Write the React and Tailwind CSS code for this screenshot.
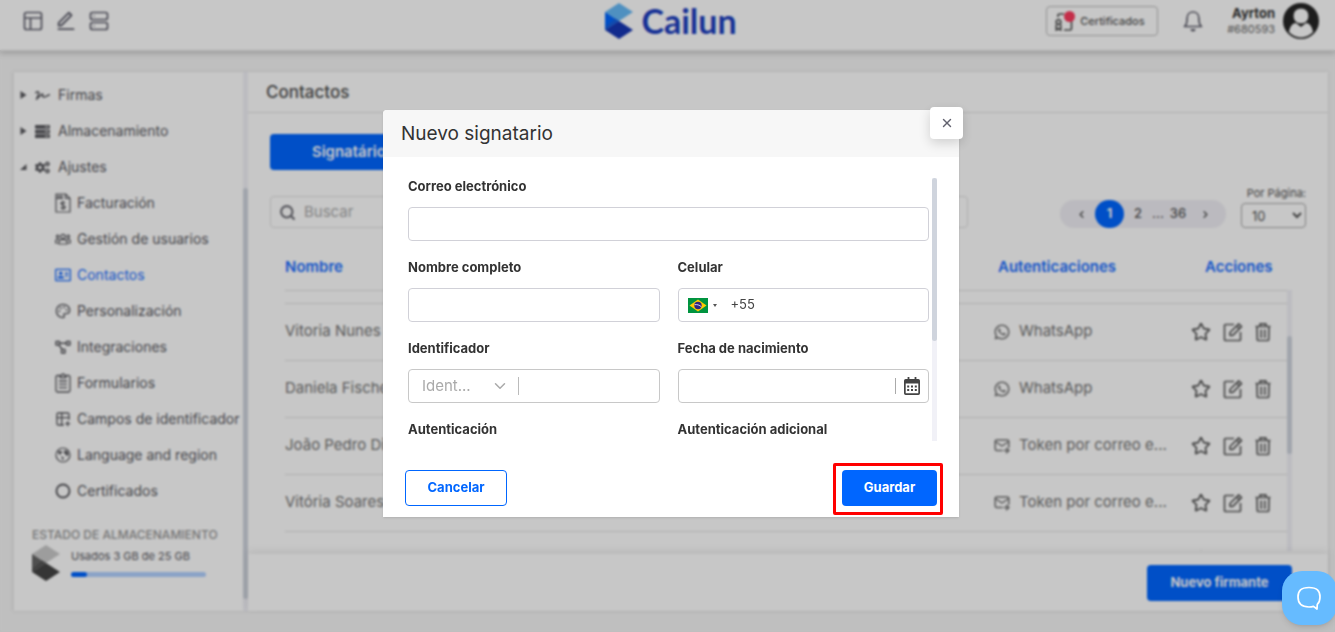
import React from "react";
import { RiEditLine, RiWhatsappLine } from "react-icons/ri";
import { FaServer, FaSignature, FaCogs, FaRegAddressCard } from "react-icons/fa";
import { TbMailForward, TbTablePlus } from "react-icons/tb";
import { ChevronDown, ChevronLeft, ChevronRight, Palette, Search, Star, X } from "lucide-react";

function CubeLogo({ className, top, left, inner, bottom }) {
  return (
    <svg className={className} viewBox="0 0 28 36" aria-hidden="true">
      <path d="M14 0 28 9 14 18 0 9Z" fill={top} />
      <path d="M0 9 14 18 0 27Z" fill={left} />
      <path d="M14 18 28 27 14 36 0 27Z" fill={bottom} />
      <path d="M0 27 14 18 10 15.500 0 24Z" fill={inner} />
    </svg>
  );
}

function Drawn({ className, box = "0 0 16 16", width = 1.3, children }) {
  return (
    <svg className={className} viewBox={box} fill="none" stroke="currentColor" strokeWidth={width} strokeLinejoin="round" aria-hidden="true">
      {children}
    </svg>
  );
}

function LayoutIcon({ className }) {
  return (
    <Drawn className={className} box="0 0 20 20" width={1.7}>
      <rect x="1.500" y="1.500" width="17" height="17" rx="2" />
      <path d="M1.500 7h17M7.500 7v11.500" />
    </Drawn>
  );
}

function DrawersIcon({ className }) {
  return (
    <Drawn className={className} box="0 0 20 20" width={1.7}>
      <rect x="1.500" y="1.500" width="17" height="7" rx="2" />
      <rect x="1.500" y="11.500" width="17" height="7" rx="2" />
      <path d="M4.500 5h1M4.500 15h1" />
    </Drawn>
  );
}

function InvoiceIcon({ className }) {
  return (
    <Drawn className={className} box="0 0 16 20" width={1.2}>
      <path d="M1 1h9.500L15 5.500V19H1Z" />
      <path d="M10.500 1v4.500H15M3 2v3M5 2v3M7 2v3M1 5.500h7" />
      <path d="M10.200 10.200C9.800 9.400 9 9 8 9c-1.200 0-2.100.6-2.100 1.600 0 2.300 4.400 1 4.400 3.400 0 1-.9 1.600-2.200 1.600-1.200 0-2-.5-2.400-1.400M8 7.700v9.200" />
    </Drawn>
  );
}

function PeopleIcon({ className }) {
  return (
    <Drawn className={className} width={1.2}>
      <circle cx="8" cy="5.500" r="2.200" />
      <circle cx="2.700" cy="5.500" r="1.300" />
      <circle cx="13.300" cy="5.500" r="1.300" />
      <path d="M4 13v-2.200C4 9.400 5.200 8.700 6.300 8.700h3.400c1.100 0 2.300.7 2.300 2.100V13ZM3.500 12H.7V9.800c0-1 .8-1.500 1.600-1.500H4M12.500 12h2.800V9.800c0-1-.8-1.500-1.600-1.500H12" />
    </Drawn>
  );
}

function ClipboardIcon({ className }) {
  return (
    <Drawn className={className} box="0 0 16 20" width={1.3}>
      <path d="M5 2.500H2.500A1.500 1.500 0 0 0 1 4v13.500A1.500 1.500 0 0 0 2.500 19h11a1.500 1.500 0 0 0 1.500-1.500V4a1.500 1.500 0 0 0-1.500-1.500H11" />
      <path d="M5 4.500v-2h1.500a1.500 1.500 0 0 1 3 0H11v2ZM4 8h8M4 11.300h8M4 14.600h8" />
    </Drawn>
  );
}

function GlobeIcon({ className }) {
  return (
    <Drawn className={className} width={1.2}>
      <circle cx="8" cy="8" r="7" />
      <path d="M3 4.500c1.500-.8 2.500.3 4-.2.5 1.700-1.200 1.500-1.600 2.900-.2.800-1.600.4-2.400-2.700ZM9.500 3.500l3 .7 1 3.300-1.800 1.500-1-2-1.500-.7ZM6.500 9.500l2 1-.7 2.700Z" fill="currentColor" strokeWidth=".5" />
    </Drawn>
  );
}

function NodesIcon({ className }) {
  return (
    <Drawn className={className} width={1.4}>
      <path d="M1 2.500h3.500v3.500H1zM11.500 2.500H15v3.500h-3.500zM6.500 10.500H10V14H6.500zM4.500 4.200h7M4 6l3.200 4.500" />
    </Drawn>
  );
}

function RingIcon({ className }) {
  return (
    <Drawn className={className} width={1.9}>
      <circle cx="8" cy="8" r="6.500" />
    </Drawn>
  );
}

function CertificateIcon() {
  return (
    <svg className="h-5 w-5" viewBox="0 0 20 20" fill="none" stroke="#555" strokeWidth="1.700" aria-hidden="true">
      <path d="M4 6V4.500A1.500 1.500 0 0 1 5.500 3H10M17.500 8v9.500a1.500 1.500 0 0 1-1.500 1.500H10" />
      <circle cx="4.500" cy="11" r="2.300" />
      <path d="M2.300 13.500V19l2.200-1.500L6.700 19v-5.500" />
    </svg>
  );
}

function BellIcon() {
  return (
    <svg className="h-6 w-5" viewBox="0 0 20 24" fill="none" stroke="#62626f" strokeWidth="1.700" aria-hidden="true">
      <path d="M1.500 17.500c2-1.500 2.600-4 2.600-8.300C4.100 5.500 6.500 3 10 3s5.900 2.500 5.900 6.200c0 4.300.6 6.800 2.600 8.300Z" strokeLinejoin="round" />
      <path d="M7.500 20h5a2.500 2.500 0 0 1-5 0Z" fill="#62626f" stroke="none" />
    </svg>
  );
}

function EditIcon() {
  return (
    <Drawn className="h-5 w-5" box="0 0 20 20" width={1.7}>
      <path d="M11 2.500H2.500a1 1 0 0 0-1 1v14a1 1 0 0 0 1 1h14a1 1 0 0 0 1-1V10" />
      <path d="M7 13.300V10.500l8.700-8.700 2.800 2.800-8.700 8.700ZM13.500 4l2.800 2.800" width="1.500" />
    </Drawn>
  );
}

function TrashIcon() {
  return (
    <Drawn className="h-5 w-4" box="0 0 16 20" width={1.7}>
      <path d="M.5 4.500h15M5 4V1.900h6V4M2 5l.3 12.500a1 1 0 0 0 1 1h9.400a1 1 0 0 0 1-1L14 5" />
      <path d="M6.200 7.500v8.500M9.800 7.500v8.500" />
    </Drawn>
  );
}

function CalendarIcon() {
  return (
    <svg className="h-[18px] w-4" viewBox="0 0 16 18" aria-hidden="true">
      <path d="M1.700 2h12.600A1.700 1.700 0 0 1 16 3.700v12.600a1.700 1.700 0 0 1-1.700 1.700H1.700A1.700 1.700 0 0 1 0 16.300V3.700A1.700 1.700 0 0 1 1.700 2Zm0 4.500v9.800h12.600V6.500Z" fill="#444" fillRule="evenodd" />
      <path d="M4.500 0v3M11.500 0v3" stroke="#444" strokeWidth="1.800" />
      <path d="M3.200 8.500h2v2h-2zM7 8.500h2v2H7zM10.800 8.500h2v2h-2zM3.200 12h2v2h-2zM7 12h2v2H7zM10.800 12h2v2h-2z" fill="#444" />
    </svg>
  );
}

function BrazilFlag() {
  return (
    <svg className="h-[15px] w-5" viewBox="0 0 20 15" aria-hidden="true">
      <path fill="#009440" d="M0 0h20v15H0z" />
      <path fill="#ffcb00" d="M10 1.500 18.500 7.500 10 13.500 1.500 7.500Z" />
      <circle cx="10" cy="7.500" r="3.700" fill="#302681" />
      <path d="M6.600 6.700c2.500-.4 5 .3 6.800 2.100" stroke="#fff" strokeWidth=".8" fill="none" />
    </svg>
  );
}

const sections = [
  { label: "Firmas", icon: FaSignature },
  { label: "Almacenamiento", icon: FaServer },
  { label: "Ajustes", icon: FaCogs, open: true },
];

const settings = [
  { label: "Facturación", icon: InvoiceIcon, tall: true },
  { label: "Gestión de usuarios", icon: PeopleIcon },
  { label: "Contactos", icon: FaRegAddressCard, active: true },
  { label: "Personalización", icon: Palette },
  { label: "Integraciones", icon: NodesIcon },
  { label: "Formularios", icon: ClipboardIcon, tall: true },
  { label: "Campos de identificador", icon: TbTablePlus },
  { label: "Language and region", icon: GlobeIcon },
  { label: "Certificados", icon: RingIcon },
];

const contacts = [
  { name: "Vitoria Nunes", auth: "WhatsApp" },
  { name: "Daniela Fischer", auth: "WhatsApp" },
  { name: "João Pedro Dias", auth: "Token por correo e..." },
  { name: "Vitória Soares", auth: "Token por correo e..." },
];

function TopBar() {
  return (
    <header className="relative z-10 grid h-[51px] shrink-0 grid-cols-[1fr_auto_1fr] items-center border-b border-[#e0e0e0] bg-white pb-2 pl-[23px] pr-4 shadow-[0_3px_5px_rgba(0,0,0,0.16)]">
      <nav className="flex items-center gap-3 text-[#62626f]">
        <a href="#panel" aria-label="Panel"><LayoutIcon className="h-5 w-5" /></a>
        <a href="#firmar" aria-label="Firmar"><RiEditLine className="h-[22px] w-[22px]" /></a>
        <a href="#archivos" aria-label="Archivos"><DrawersIcon className="h-5 w-5" /></a>
      </nav>
      <a href="#inicio" className="flex items-center gap-2 font-[Lato,sans-serif] text-[34px] font-bold leading-9 text-[#1d3fc0]">
        <CubeLogo className="h-9 w-7" top="#66b9f7" left="#0066ff" inner="#1560e0" bottom="#1636b5" />
        Cailun
      </a>
      <div className="flex items-center justify-end">
        <button className="flex h-[30px] w-[112px] items-center gap-1.5 rounded border border-[#bdbdbd] pl-[7px] text-[11px] font-medium text-[#555]">
          <span className="relative">
            <CertificateIcon />
            <span className="absolute -right-px top-0 h-[11px] w-[11px] rounded-full bg-[#fb3b5e]" />
          </span>
          <span>Certificados</span>
        </button>
        <button className="ml-[25px]" aria-label="Notificaciones"><BellIcon /></button>
        <div className="ml-6 text-right leading-4">
          <p className="text-[13px] font-bold text-[#333]">Ayrton</p>
          <p className="text-[11px] text-[#666]">#680593</p>
        </div>
        <button className="ml-2" aria-label="Cuenta">
          <svg className="h-9 w-9" viewBox="0 0 36 36" aria-hidden="true">
            <circle cx="18" cy="18" r="18" fill="#262626" />
            <path d="M6 29c1-6 4-9 7-9l5 4 5-4c3 0 6 3 7 9a16 16 0 0 1-24 0Z" fill="#fff" />
            <circle cx="18" cy="13" r="8" fill="#fff" stroke="#262626" />
          </svg>
        </button>
      </div>
    </header>
  );
}

function Sidebar() {
  return (
    <aside className="flex w-[235px] shrink-0 border-l border-[#eee]">
      <div className="flex min-w-0 flex-1 flex-col whitespace-nowrap pt-[5px] text-[#5a5a5f]">
        <ul className="text-sm">
          {sections.map(({ label, icon: Icon, open }) => (
            <li key={label}>
              <a href="#menu" className="flex h-9 items-center gap-2 pl-1.5">
                <svg className="h-2 w-[7px]" viewBox="0 0 7 8" fill="currentColor" aria-hidden="true">
                  <path d={open ? "M6.500 1v6H0Z" : "M.5 0 6.500 4 .5 8Z"} />
                </svg>
                <Icon className="h-[15px] w-[15px]" />
                {label}
              </a>
            </li>
          ))}
          {settings.map(({ label, icon: Icon, active, tall }) => (
            <li key={label}>
              <a href="#menu" className={active ? "flex h-9 items-center gap-1.5 pl-[41px] text-[#1a6dff]" : "flex h-9 items-center gap-1.5 pl-[41px]"}>
                <Icon className={tall ? "h-5 w-4 shrink-0" : "h-4 w-4 shrink-0"} />
                {label}
              </a>
            </li>
          ))}
        </ul>
        <section className="mt-[18px] pl-[18px]">
          <h2 className="text-xs font-medium leading-4 text-[#999]">ESTADO DE ALMACENAMIENTO</h2>
          <div className="mt-0.5 flex gap-[11px]">
            <CubeLogo className="h-9 w-7" top="#cacaca" left="#666" inner="#555" bottom="#444" />
            <div className="w-[135px] pt-0.5 text-[11px] leading-[18px]">
              <label htmlFor="storage">Usados 3 GB de 25 GB</label>
              <div id="storage" role="progressbar" aria-valuenow={3} aria-valuemax={25} className="mt-[7px] h-[5px] rounded-full bg-[#b2d1ff]">
                <div className="h-full w-[12%] rounded-full bg-[#0066ff]" />
              </div>
            </div>
          </div>
        </section>
      </div>
      <div className="w-[5px] shrink-0 bg-[#f1f1f7] pb-3 pt-[116px]">
        <div className="h-full rounded-full bg-[#cfd4dd]" />
      </div>
    </aside>
  );
}

function Pagination() {
  return (
    <nav className="flex h-7 items-center rounded-full bg-[#f0eff5] text-[13px] font-medium text-[#555]" aria-label="Páginas">
      <button className="flex w-[35px] justify-end pr-2" aria-label="Anterior"><ChevronLeft size={11} strokeWidth={3} /></button>
      <button className="h-7 w-[29px] rounded-full bg-[#0066ff] font-bold text-white">1</button>
      <button className="w-7">2</button>
      <span className="w-3">...</span>
      <button className="w-7">36</button>
      <button className="flex w-[34px] pl-2" aria-label="Siguiente"><ChevronRight size={11} strokeWidth={3} /></button>
    </nav>
  );
}

function ContactRow({ name, auth }) {
  const AuthIcon = auth === "WhatsApp" ? RiWhatsappLine : TbMailForward;
  return (
    <tr className="h-[57px] border-b border-[#e2e2e2]">
      <td className="text-[15px]">{name}</td>
      <td>
        <span className="flex items-center gap-2 text-[15px]"><AuthIcon className="h-[18px] w-[18px]" />{auth}</span>
      </td>
      <td>
        <span className="flex items-center gap-3 text-[#606060]">
          <button aria-label={"Favorito " + name}><Star size={20} strokeWidth={2.2} /></button>
          <button aria-label={"Editar " + name}><EditIcon /></button>
          <button aria-label={"Eliminar " + name}><TrashIcon /></button>
        </span>
      </td>
    </tr>
  );
}

function Contacts() {
  return (
    <main className="flex min-w-0 flex-1 flex-col">
      <div className="h-[41px] shrink-0 border-b border-[#e2e2e2] pl-[18px] text-[17px] font-medium leading-[41px] text-[#505050]">
        <h1>Contactos</h1>
      </div>
      <div className="flex min-h-0 flex-1 flex-col pl-[22px] pt-[21px]">
        <button className="h-9 w-[166px] shrink-0 rounded bg-[#0066ff] text-[15px] font-semibold text-white">Signatários</button>
        <div className="mt-[15px] flex shrink-0 items-end pr-[22px]">
          <label className="flex h-8 max-w-[698px] flex-1 items-center gap-2 rounded border border-[#e2e2e2] px-2 text-[#707078]">
            <Search size={17} strokeWidth={3} />
            <input aria-label="Buscar" placeholder="Buscar" className="min-w-0 flex-1 bg-transparent text-[15px] placeholder:text-[#aaa] focus:outline-none" />
          </label>
          <div className="ml-auto flex items-end gap-[15px]">
            <Pagination />
            <div className="flex flex-col items-end gap-0.5 text-[11px] text-[#555]">
              <label htmlFor="per-page" className="leading-4">Por Página:</label>
              <select id="per-page" className="h-[25px] w-[65px] rounded border border-[#a8a8a8] bg-white pl-1.5 text-[13px]">
                <option>10</option>
                <option>25</option>
              </select>
            </div>
          </div>
        </div>
        <div className="mb-[3px] ml-[15px] mr-9 mt-2 flex min-h-0 flex-1 overflow-hidden">
          <table className="w-full table-fixed self-start text-left text-[#757575]">
            <colgroup>
              <col />
              <col className="w-[198px]" />
              <col className="w-24" />
            </colgroup>
            <thead>
              <tr className="h-[54px] border-b border-[#e2e2e2] text-[15px] text-[#1a6dff]">
                <th className="pt-2 font-semibold">Nombre</th>
                <th className="pl-[5px] pt-2 font-semibold">Autenticaciones</th>
                <th className="pl-3.5 pt-2 font-semibold">Acciones</th>
              </tr>
            </thead>
            <tbody>
              <tr className="h-[13px] border-b border-[#e2e2e2]"><td colSpan={3} /></tr>
              {contacts.map((c) => <ContactRow key={c.name} {...c} />)}
              <ContactRow name="" auth="" />
            </tbody>
          </table>
          <div className="mt-[54px] w-[5px] shrink-0 bg-[#f1f1f7] pt-[46px]">
            <div className="h-[118px] rounded-full bg-[#cfd4dd]" />
          </div>
        </div>
      </div>
      <footer className="flex h-[57px] shrink-0 items-center justify-end pr-9 shadow-[0_-3px_8px_rgba(0,0,0,0.08)]">
        <button className="h-9 w-[145px] rounded bg-[#0066ff] text-[13px] font-bold text-white">Nuevo firmante</button>
      </footer>
    </main>
  );
}

const labelClass = "text-[13px] font-bold leading-[17px] text-[#333]";
const boxClass = "h-[34px] w-full rounded border border-[#d1d1d8] bg-white px-3 text-[13px] text-[#444]";

function Field({ id, label, className, children }) {
  return (
    <div className={"flex flex-col gap-3 " + (className || "")}>
      <label htmlFor={id} className={labelClass}>{label}</label>
      {children}
    </div>
  );
}

function SignerDialog() {
  return (
    <div role="dialog" aria-modal="true" aria-labelledby="dialog-title" className="relative w-full max-w-xl rounded-t-sm bg-white shadow-sm">
      <div className="flex h-[47px] items-center rounded-t-sm bg-[#f7f7f7] pl-[18px]">
        <h2 id="dialog-title" className="text-[19px] leading-6 text-[#333]">Nuevo signatario</h2>
      </div>
      <button aria-label="Cerrar" className="absolute -right-1 -top-[3px] grid h-8 w-[33px] place-items-center rounded bg-white text-[#62626f] shadow-[0_4px_12px_rgba(0,0,0,0.16)]">
        <X size={14} strokeWidth={2.4} />
      </button>
      <form>
        <div className="mb-[29px] mt-[21px] flex h-[263px] gap-[3px] overflow-hidden pl-[25px] pr-[22px]">
          <div className="grid flex-1 grid-cols-2 content-start gap-[18px]">
            <Field id="email" label="Correo electrónico" className="col-span-2">
              <input id="email" type="email" className={boxClass} />
            </Field>
            <Field id="name" label="Nombre completo">
              <input id="name" className={boxClass} />
            </Field>
            <Field id="phone" label="Celular">
              <div className="flex h-[34px] items-center rounded border border-[#d1d1d8] pl-[9px]">
                <button type="button" aria-label="País" className="flex items-center gap-[5px]">
                  <BrazilFlag />
                  <svg className="h-[3px] w-1" viewBox="0 0 4 3" aria-hidden="true"><path d="M0 0h4L2 3Z" fill="#555" /></svg>
                </button>
                <input id="phone" defaultValue="+55" className="ml-3.5 min-w-0 flex-1 text-[13px] text-[#444] focus:outline-none" />
              </div>
            </Field>
            <Field id="identifier" label="Identificador">
              <div className="flex h-[34px] items-center rounded border border-[#c8c8c8]">
                <select aria-label="Tipo de identificador" className="w-[74px] appearance-none pl-[13px] text-[15px] text-[#aaa]">
                  <option>Ident...</option>
                </select>
                <ChevronDown size={18} className="ml-2 mr-[9px] shrink-0 text-[#aaa]" />
                <input id="identifier" className="h-[18px] min-w-0 flex-1 border-l border-[#bbb] px-2 text-[13px] focus:outline-none" />
              </div>
            </Field>
            <Field id="birth" label="Fecha de nacimiento">
              <div className="flex h-[34px] items-center rounded border border-[#c8c8c8] pr-2">
                <input id="birth" className="h-4 min-w-0 flex-1 border-r border-[#aaa] px-2 text-[13px] focus:outline-none" />
                <button type="button" aria-label="Abrir calendario" className="ml-2"><CalendarIcon /></button>
              </div>
            </Field>
            <Field id="auth" label="Autenticación">
              <select id="auth" className={boxClass}><option /></select>
            </Field>
            <Field id="auth-extra" label="Autenticación adicional">
              <select id="auth-extra" className={boxClass}><option /></select>
            </Field>
          </div>
          <div className="w-[5px] shrink-0 bg-[#f1f1f7]">
            <div className="h-[163px] rounded-full bg-[#cfd4dd]" />
          </div>
        </div>
        <div className="flex items-center justify-between pb-[11px] pl-[22px] pr-[22px] text-[13px] font-bold">
          <button type="button" className="h-9 w-[102px] rounded border border-[#0066ff] text-[#0066ff]">Cancelar</button>
          <div className="relative">
            <button type="button" className="h-9 w-[95px] rounded bg-[#0066ff] text-white">Guardar</button>
            <span className="pointer-events-none absolute -bottom-[9px] -left-[9px] -right-1.5 -top-[7px] rounded-[2px] border-[3px] border-[#ff0000]" />
          </div>
        </div>
      </form>
    </div>
  );
}

export default function App() {
  return (
    <div className="flex h-screen flex-col overflow-hidden bg-[#f5f5f5] font-[Inter,sans-serif]">
      <TopBar />
      <div className="flex min-h-0 flex-1 pb-[21px] pl-[13px] pr-[7px] pt-[21px]">
        <div className="flex min-w-0 flex-1 bg-white shadow-[0_0_3px_rgba(0,0,0,0.12)]">
          <Sidebar />
          <Contacts />
        </div>
      </div>
      <div className="fixed inset-0 z-20 flex items-start justify-center bg-black/22 pl-[7px] pt-[110px] backdrop-blur-[1px]">
        <SignerDialog />
      </div>
      <button aria-label="Abrir chat" className="fixed -right-[2px] bottom-[7px] z-30 grid h-[54px] w-[55px] place-items-center rounded-[20px] bg-[#66bbff] pr-0.5 shadow-md">
        <svg className="h-6 w-6" viewBox="0 0 24 24" fill="none" stroke="#fff" strokeWidth="1.700" strokeLinejoin="round" aria-hidden="true">
          <path d="M12 1.500C4 1.500 1 4.500 1 11s3.500 10 11 10c1.500 0 3-.2 4.500-.6L20 23l.3-4.700c1.800-1.600 2.700-4 2.700-7.300C23 4.500 20 1.500 12 1.500Z" />
        </svg>
      </button>
    </div>
  );
}
